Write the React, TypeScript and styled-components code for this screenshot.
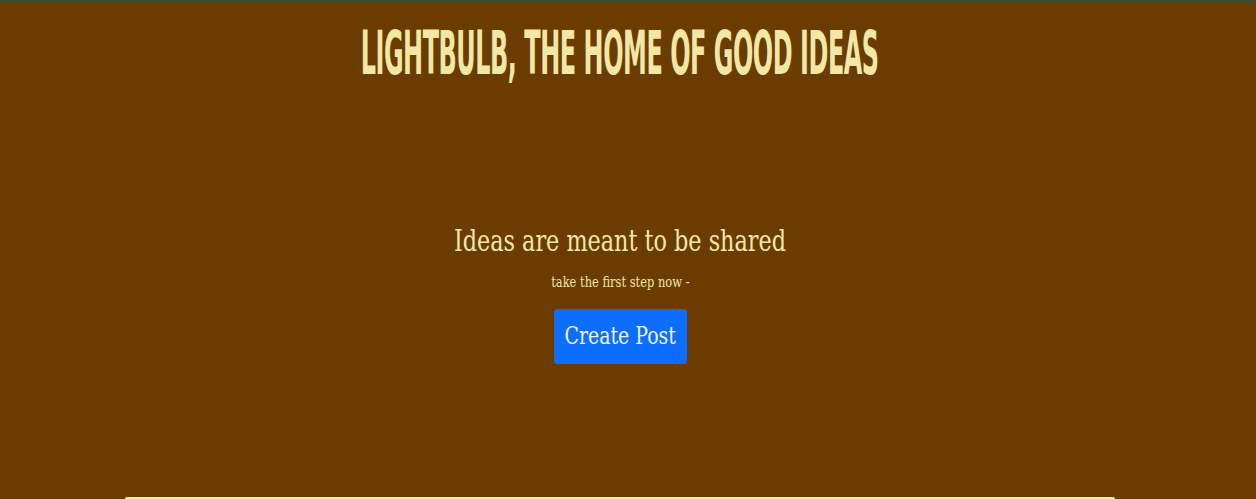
import React from "react";
import styled, { createGlobalStyle } from "styled-components";

const Global = createGlobalStyle`
  html, body { margin: 0; padding: 0; }
  body {
    background: #6a3c00;
    font-family: "DejaVu Serif", serif;
    overflow: hidden;
  }
`;

const Page = styled.div`
  min-height: 499px;
  border-top: 3px solid #3f4a2b;
  box-sizing: border-box;
  padding-right: 16px;
  display: flex;
  flex-direction: column;
  align-items: center;
`;

const Title = styled.h1`
  margin: 19px 0 0;
  height: 62px;
  font-family: "DejaVu Sans", sans-serif;
  font-stretch: condensed;
  font-weight: 700;
  font-size: 60px;
  line-height: 62px;
  color: #f3e7a6;
  letter-spacing: -1px;
  transform: scaleX(0.443);
  white-space: nowrap;
`;

const Hero = styled.section`
  margin-top: 139px;
  display: flex;
  flex-direction: column;
  align-items: center;
`;

const Lead = styled.h2`
  margin: 0;
  font-family: "DejaVu Serif", serif;
  font-stretch: condensed;
  font-weight: 400;
  font-size: 29px;
  line-height: 36px;
  color: #f3e7a6;
  transform: scaleX(0.856);
  white-space: nowrap;
`;

const Sub = styled.p`
  margin: 13px 0 0;
  font-family: "DejaVu Serif", serif;
  font-stretch: condensed;
  font-size: 15px;
  line-height: 20px;
  color: #f3e7a6;
  transform: scaleX(0.85);
  white-space: nowrap;
`;

const Button = styled.button`
  margin-top: 17px;
  width: 133px;
  height: 55px;
  border: none;
  border-radius: 4px;
  background: #0d6efd;
  color: #eef3d8;
  font-family: "DejaVu Serif", serif;
  font-stretch: condensed;
  font-size: 25px;
  padding: 0 0 3px;
  cursor: pointer;
`;

const ButtonLabel = styled.span`
  display: inline-block;
  transform: scaleX(0.84);
  white-space: nowrap;
`;

const Card = styled.div`
  margin-top: auto;
  width: 990px;
  height: 2px;
  background: #f6ebb3;
  border-radius: 6px 6px 0 0;
`;

export default function App() {
  return (
    <>
      <Global />
      <Page>
        <Title>LIGHTBULB, THE HOME OF GOOD IDEAS</Title>
        <Hero>
          <Lead>Ideas are meant to be shared</Lead>
          <Sub>take the first step now -</Sub>
          <Button>
            <ButtonLabel>Create Post</ButtonLabel>
          </Button>
        </Hero>
        <Card />
      </Page>
    </>
  );
}
